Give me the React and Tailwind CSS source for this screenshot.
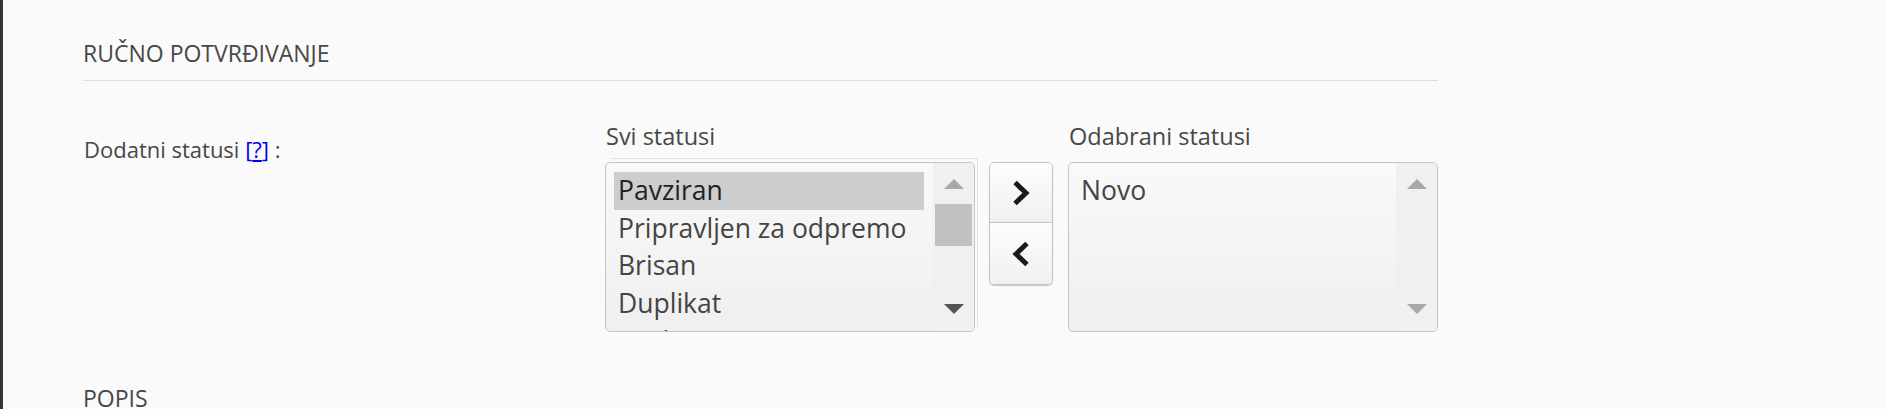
import React from "react";

const allStatuses = ["Pavziran", "Pripravljen za odpremo", "Brisan", "Duplikat", "Poslan"];
const selectedStatuses = ["Novo"];

const Triangle = ({ down, color }) => (
    <svg width="20" height="10" viewBox="0 0 20 10" className="block">
        {down ? (
            <polygon points="0,0 20,0 10,10" fill={color} />
        ) : (
            <polygon points="10,0 20,10 0,10" fill={color} />
        )}
    </svg>
);

const Chevron = ({ left }) => (
    <svg width="18" height="26" viewBox="0 0 18 26" className="block">
        <polyline
            points={left ? "15,2.5 4,13 15,23.5" : "3,2.5 14,13 3,23.5"}
            fill="none"
            stroke="#1a1a1a"
            strokeWidth="5"
            strokeLinejoin="miter"
        />
    </svg>
);

const ListBox = ({ items, selected, showThumb, downColor }) => (
    <div className="flex h-[170px] w-[370px] overflow-hidden rounded-[5px] border border-[#c4c4c4] bg-gradient-to-b from-[#f9f9f9] to-[#efefef]">
        <div className="flex-1 overflow-hidden pl-[8px] pr-[9px] pt-[9px]">
            {items.map((item) => (
                <div
                    key={item}
                    className={`pl-[4px] text-[26.5px] leading-[37.7px] whitespace-nowrap ${
                        item === selected ? "bg-[#cdcdcd] text-[#222]" : "text-[#444]"
                    }`}
                >
                    {item}
                </div>
            ))}
        </div>
        <div className="flex w-[41px] shrink-0 flex-col items-center justify-between bg-[#f0f0f0] pt-[16px] pb-[17px]">
            <div className="flex w-full flex-col items-center">
                <Triangle color="#a8a8a8" />
                {showThumb && <div className="mt-[15px] h-[42px] w-[37px] bg-[#c1c1c1]" />}
            </div>
            <Triangle down color={downColor} />
        </div>
    </div>
);

const App = () => {
    return (
        <div className="min-h-[409px] overflow-hidden border-l-[3px] border-[#333] bg-[#fafafa] font-['Open_Sans',sans-serif] text-[#474747]">
            <div className="ml-[80px] w-[1355px]">
                {/* Ručno potvrđivanje */}
                <h2 className="border-b border-[#dddddd] pt-[39px] pb-[12px] text-[23px] leading-[29px] font-normal">
                    RUČNO POTVRĐIVANJE
                </h2>

                <div className="flex pt-[40px]">
                    <div className="w-[522px] shrink-0 pl-[1px] pt-[13px] text-[22px] leading-[30px]">
                        Dodatni statusi{" "}
                        <a href="#" className="text-[#0000ee]">
                            [<span className="underline">?</span>]
                        </a>{" "}
                        :
                    </div>

                    <div className="flex shrink-0 items-start">
                        <div>
                            <div className="pl-[1px] text-[23.5px] leading-[30px]">Svi statusi</div>
                            <div className="relative pt-[11px]">
                                <span className="absolute top-[7px] left-[5px] right-[-3px] bottom-[5px] border-t border-r border-[#d7e6f4]" />
                                <div className="relative">
                                    <ListBox items={allStatuses} selected="Pavziran" showThumb downColor="#555555" />
                                </div>
                            </div>
                        </div>

                        <div className="ml-[14px] mt-[41px] flex w-[64px] flex-col overflow-hidden rounded-[5px] border border-[#c4c4c4] shadow-[0_1px_1px_rgba(0,0,0,0.2)]">
                            <button className="flex h-[60px] items-center justify-center border-b border-[#c4c4c4] bg-gradient-to-b from-[#fdfdfd] to-[#f0f0f0]">
                                <Chevron />
                            </button>
                            <button className="flex h-[61px] items-center justify-center bg-gradient-to-b from-[#fdfdfd] to-[#f0f0f0]">
                                <Chevron left />
                            </button>
                        </div>

                        <div className="ml-[15px]">
                            <div className="pl-[1px] text-[23.5px] leading-[30px]">Odabrani statusi</div>
                            <div className="pt-[11px]">
                                <ListBox items={selectedStatuses} selected={null} downColor="#a8a8a8" />
                            </div>
                        </div>
                    </div>
                </div>

                {/* Popis */}
                <h2 className="mt-[52px] text-[23px] leading-[29px] font-normal">POPIS</h2>
            </div>
        </div>
    );
};

export default App;
